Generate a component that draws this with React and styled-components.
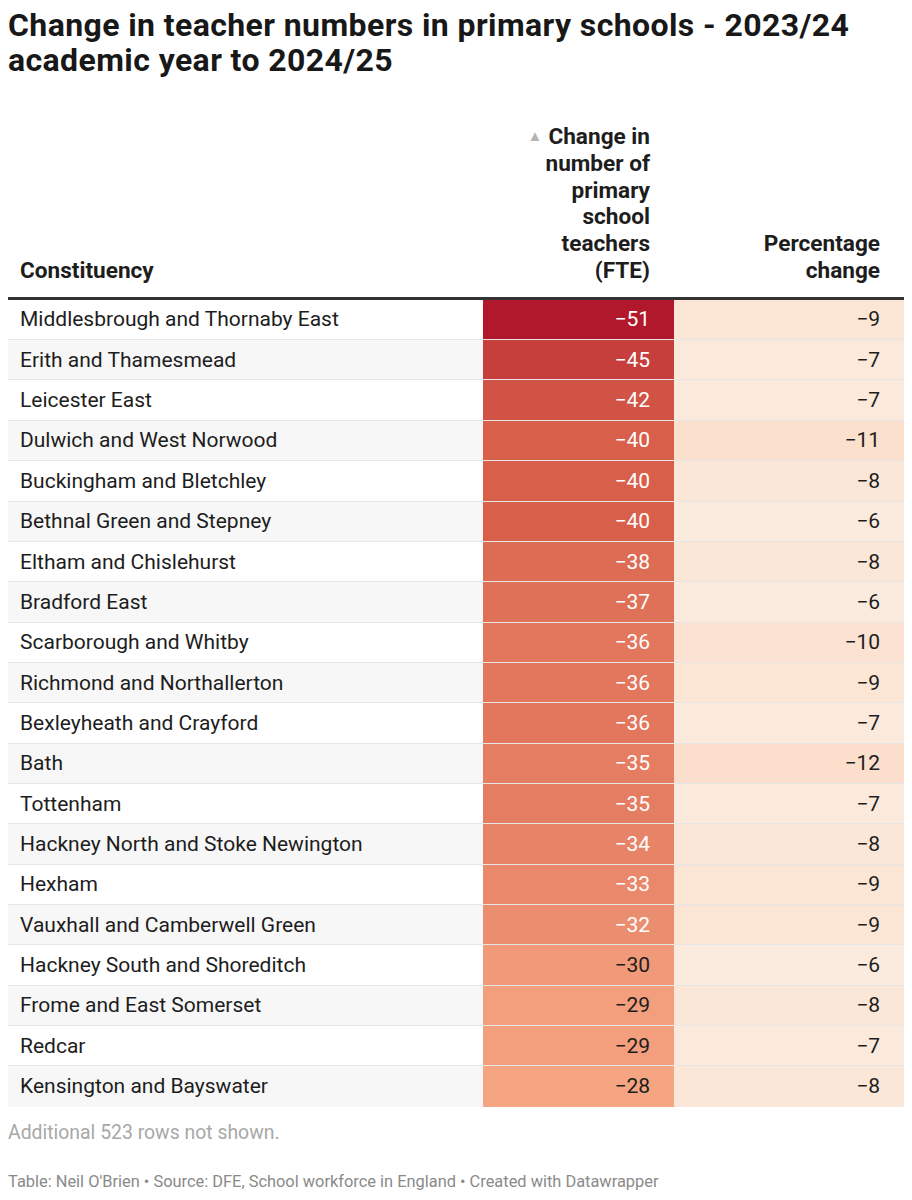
import React from "react";
import styled, { createGlobalStyle } from "styled-components";

const rows = [
  ["Middlesbrough and Thornaby East", -51, -9],
  ["Erith and Thamesmead", -45, -7],
  ["Leicester East", -42, -7],
  ["Dulwich and West Norwood", -40, -11],
  ["Buckingham and Bletchley", -40, -8],
  ["Bethnal Green and Stepney", -40, -6],
  ["Eltham and Chislehurst", -38, -8],
  ["Bradford East", -37, -6],
  ["Scarborough and Whitby", -36, -10],
  ["Richmond and Northallerton", -36, -9],
  ["Bexleyheath and Crayford", -36, -7],
  ["Bath", -35, -12],
  ["Tottenham", -35, -7],
  ["Hackney North and Stoke Newington", -34, -8],
  ["Hexham", -33, -9],
  ["Vauxhall and Camberwell Green", -32, -9],
  ["Hackney South and Shoreditch", -30, -6],
  ["Frome and East Somerset", -29, -8],
  ["Redcar", -29, -7],
  ["Kensington and Bayswater", -28, -8],
];

// colour helpers
const hex = (h) => [1, 3, 5].map((i) => parseInt(h.slice(i, i + 2), 16));
const mix = (a, b, t) =>
  "rgb(" + hex(a).map((c, i) => Math.round(c + (hex(b)[i] - c) * t)).join(",") + ")";

const changeColor = (v) => {
  if (v <= -40) return mix("#b2182b", "#d8604b", (v + 51) / 11);
  return mix("#d8604b", "#f5a582", (v + 40) / 12);
};
const pctColor = (v) => mix("#fbdecb", "#fbebdf", (v + 12) / 6);

const minus = (v) => "\u2212" + Math.abs(v);

const App = () => {
  return (
    <Page>
      <GlobalStyle />
      <Title>
        Change in teacher numbers in primary schools - 2023/24 academic year to
        2024/25
      </Title>
      <Table>
        <HeadRow>
          <HeadCell>Constituency</HeadCell>
          <HeadCell $right $pad={24}>
            <span>
              <SortIcon>▲</SortIcon>Change in
            </span>
            <br />
            number of
            <br />
            primary
            <br />
            school
            <br />
            teachers
            <br />
            (FTE)
          </HeadCell>
          <HeadCell $right $pad={24}>
            Percentage
            <br />
            change
          </HeadCell>
        </HeadRow>
        {rows.map(([name, change, pct], i) => (
          <Row key={name} $striped={i % 2 === 1} $last={i === rows.length - 1}>
            <NameCell>{name}</NameCell>
            <NumCell
              style={{ background: changeColor(change) }}
              $light={change <= -31}
            >
              {minus(change)}
            </NumCell>
            <NumCell style={{ background: pctColor(pct) }}>{minus(pct)}</NumCell>
          </Row>
        ))}
      </Table>
      <Notes>Additional 523 rows not shown.</Notes>
      <Footer>
        Table: Neil O'Brien • Source: DFE, School workforce in England • Created
        with Datawrapper
      </Footer>
    </Page>
  );
};

// ------------------STYLED COMPONENTS ---------------------

const GlobalStyle = createGlobalStyle`
  body {
    margin: 0;
    background: #fff;
    font-family: Roboto, "Liberation Sans", sans-serif;
    color: #1d1d1d;
  }
`;

const Page = styled.div`
  width: 912px;
  padding: 0 8px;
  box-sizing: border-box;
`;

const Title = styled.h1`
  margin: 0;
  padding-top: 8px;
  font-size: 32px;
  font-weight: 700;
  line-height: 35px;
  letter-spacing: 0.4px;
  color: #181818;
  width: 880px;
`;

const Table = styled.div`
  margin-top: 46px;
  width: 896px;
`;

const HeadRow = styled.div`
  display: grid;
  grid-template-columns: 475px 191px 230px;
  align-items: end;
  border-bottom: 3px solid #333;
  padding-bottom: 12px;
`;

const HeadCell = styled.div`
  font-size: 22.6px;
  font-weight: 700;
  line-height: 26.8px;
  text-align: ${(p) => (p.$right ? "right" : "left")};
  padding: 0 ${(p) => p.$pad || 0}px 0 12px;
  color: #1d1d1d;
`;

const SortIcon = styled.span`
  font-size: 15px;
  line-height: 0;
  color: #b5b5b5;
  margin-right: 6px;
  vertical-align: 3px;
`;

const Row = styled.div`
  display: grid;
  grid-template-columns: 475px 191px 230px;
  height: 40.35px;
  box-sizing: border-box;
  background: ${(p) => (p.$striped ? "#f7f7f7" : "#fff")};
  border-bottom: ${(p) => (p.$last ? "none" : "1px solid #e6e6e6")};
  font-size: 21px;
`;

const NameCell = styled.div`
  display: flex;
  align-items: center;
  padding-left: 12px;
`;

const NumCell = styled.div`
  display: flex;
  align-items: center;
  justify-content: flex-end;
  padding-right: 24px;
  color: ${(p) => (p.$light ? "#fff" : "#1d1d1d")};
`;

const Notes = styled.div`
  margin-top: 14px;
  font-size: 19.4px;
  color: #a8a8a8;
`;

const Footer = styled.div`
  margin-top: 28px;
  font-size: 16.4px;
  color: #8a8a8a;
`;

export default App;
